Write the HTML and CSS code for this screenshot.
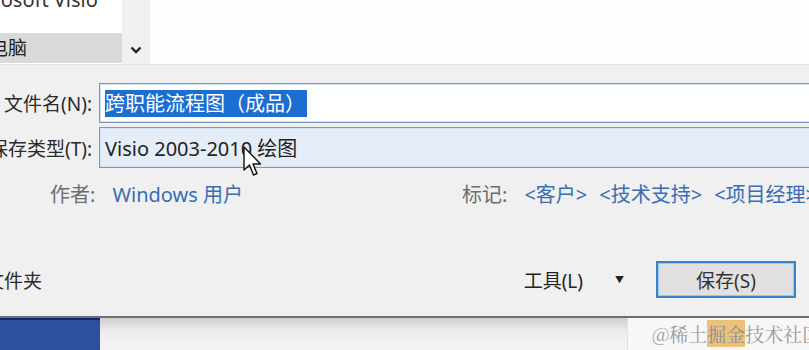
FILE: index.html
```html
<!DOCTYPE html>
<html>
<head>
    <meta charset="utf-8">
    <link rel="stylesheet" href="styles.css">
</head>
<body>
    <div class="dialog">
        <div class="browser">
            <div class="nav">
                <div class="nav-app">Microsoft Visio</div>
                <div class="nav-item selected">此电脑</div>
            </div>
            <div class="nav-scroll">
                <svg class="chevron" width="12" height="8" viewBox="0 0 12 8">
                    <path d="M1.5 1.5 L6 6 L10.5 1.5" fill="none" stroke="#222" stroke-width="2.4"/>
                </svg>
            </div>
            <div class="file-view"></div>
        </div>

        <div class="fields">
            <div class="field-row">
                <div class="field-label">文件名(N):</div>
                <div class="field-input name-input">
                    <span class="selection">跨职能流程图（成品）</span>
                </div>
            </div>
            <div class="field-row">
                <div class="field-label">保存类型(T):</div>
                <div class="field-input type-input">Visio 2003-2010 绘图</div>
            </div>
        </div>

        <div class="meta">
            <div class="meta-item author">
                <span class="meta-label">作者:</span>
                <span class="meta-value">Windows 用户</span>
            </div>
            <div class="meta-item">
                <span class="meta-label">标记:</span>
                <span class="meta-value">&lt;客户&gt;</span>
                <span class="meta-value">&lt;技术支持&gt;</span>
                <span class="meta-value">&lt;项目经理&gt;</span>
            </div>
        </div>

        <div class="footer">
            <div class="hide-folders">隐藏文件夹</div>
            <div class="actions">
                <span class="tools">工具(L)</span>
                <span class="tools-arrow">▼</span>
                <button class="save-button">保存(S)</button>
            </div>
        </div>

        <svg class="cursor" width="20" height="32" viewBox="0 0 20 32">
            <path d="M1 1 L1 24 L6.5 19 L10.5 29 L14 27.5 L10 18 L17.5 18 Z" fill="#fff" stroke="#111" stroke-width="1.4" stroke-linejoin="round"/>
        </svg>
    </div>

    <div class="desktop">
        <div class="taskbar-app"></div>
        <div class="desktop-gray"></div>
        <div class="desktop-page">
            <span class="watermark">@稀土<span class="mark">掘金</span>技术社区</span>
        </div>
    </div>
</body>
</html>
```

FILE: styles.css
```css
body {
    margin: 0;
    width: 809px;
    height: 350px;
    overflow: hidden;
    background: #f0f0f0;
    font-family: "Noto Sans", "Noto Sans CJK SC", sans-serif;
    color: #1e1e1e;
}
.dialog {
    position: relative;
    height: 316px;
    background: #f0f0f0;
    border-bottom: 2px solid #6f6f6f;
    overflow: hidden;
}

/* file browser strip at the top */
.browser {
    display: flex;
    height: 64px;
    border-bottom: 1px solid #e4e4e4;
}
.nav {
    width: 122px;
    background: #fff;
    overflow: hidden;
}
.nav-app {
    font-size: 20px;
    line-height: 24px;
    margin-top: -12px;
    text-indent: -40px;
    color: #333;
    white-space: nowrap;
}
.nav-item {
    margin-top: 21px;
    height: 30px;
    line-height: 30px;
    font-size: 19px;
    text-indent: -30px;
    white-space: nowrap;
    color: #222;
}
.nav-item.selected {
    background: #d9d9d9;
}
.nav-scroll {
    width: 28px;
    background: #f0f0f0;
    display: flex;
    justify-content: center;
    align-items: flex-end;
    padding-bottom: 10px;
    box-sizing: border-box;
}
.file-view {
    flex: 1;
    background: #fefefe;
}

/* name + type fields */
.fields {
    margin-top: 18px;
    display: flex;
    flex-direction: column;
    gap: 4px;
}
.field-row {
    display: flex;
    align-items: center;
    gap: 7px;
}
.field-label {
    width: 92px;
    flex: none;
    display: flex;
    justify-content: flex-end;
    white-space: nowrap;
    font-size: 19px;
    color: #2a2a2a;
}
.field-input {
    flex: 1;
    margin-right: -10px;
    box-sizing: border-box;
    height: 40px;
    border: 1px solid #7c97bf;
    box-shadow: inset 0 0 0 1px #d2e3f6;
    display: flex;
    align-items: center;
    padding-left: 5px;
    font-size: 20px;
    white-space: nowrap;
}
.name-input {
    background: #fff;
}
.selection {
    background: #1c6fd1;
    color: #fff;
    line-height: 27px;
    padding-right: 2px;
}
.type-input {
    height: 41px;
    background: #e4edf8;
    color: #222;
}

/* author / tags */
.meta {
    display: flex;
    margin-top: 14px;
    padding-left: 50px;
    font-size: 20px;
    line-height: 26px;
    white-space: nowrap;
}
.meta-item {
    display: flex;
    gap: 12px;
}
.meta-item.author {
    flex: none;
    width: 412px;
    gap: 17px;
}
.meta-label {
    color: #6d6d6d;
}
.meta-item .meta-label {
    margin-right: 5px;
}
.meta-item.author .meta-label {
    margin-right: 0;
}
.meta-value {
    color: #3a6db4;
}

/* bottom buttons */
.footer {
    display: flex;
    justify-content: space-between;
    align-items: center;
    margin-top: 53px;
}
.hide-folders {
    width: 42px;
    display: flex;
    justify-content: flex-end;
    white-space: nowrap;
    font-size: 19px;
    color: #2a2a2a;
    overflow: hidden;
}
.actions {
    display: flex;
    align-items: center;
    margin-right: 13px;
}
.tools {
    font-size: 19px;
    color: #222;
}
.tools-arrow {
    font-size: 9px;
    margin-left: 32px;
    margin-right: 32px;
    color: #222;
}
.save-button {
    width: 140px;
    height: 37px;
    border: 2px solid #3a82c9;
    box-shadow: inset 0 0 0 1px #9cc6ec;
    background: #e1e1e1;
    font-family: inherit;
    font-size: 19px;
    color: #333;
    padding: 0;
}

.cursor {
    position: absolute;
    left: 243px;
    top: 146px;
}

/* desktop behind the dialog */
.desktop {
    display: flex;
    height: 32px;
}
.taskbar-app {
    flex: none;
    width: 100px;
    background: #2e4e9f;
    border-top: 2px solid #14246f;
}
.desktop-gray {
    flex: none;
    width: 527px;
    background: linear-gradient(#cfcfcf, #ececec 40%, #f3f3f3);
}
.desktop-page {
    flex: 1;
    min-width: 0;
    overflow: hidden;
    background: #f7f7f7;
    border-left: 1px solid #e2e2e2;
    padding-left: 24px;
}
.watermark {
    font-family: "Noto Serif CJK SC", "Liberation Serif", "Noto Sans CJK SC", serif;
    font-size: 19px;
    line-height: 32px;
    color: #9a9a9a;
    white-space: nowrap;
}
.mark {
    background: #ecc27a;
    color: #8f8f8f;
}
```
